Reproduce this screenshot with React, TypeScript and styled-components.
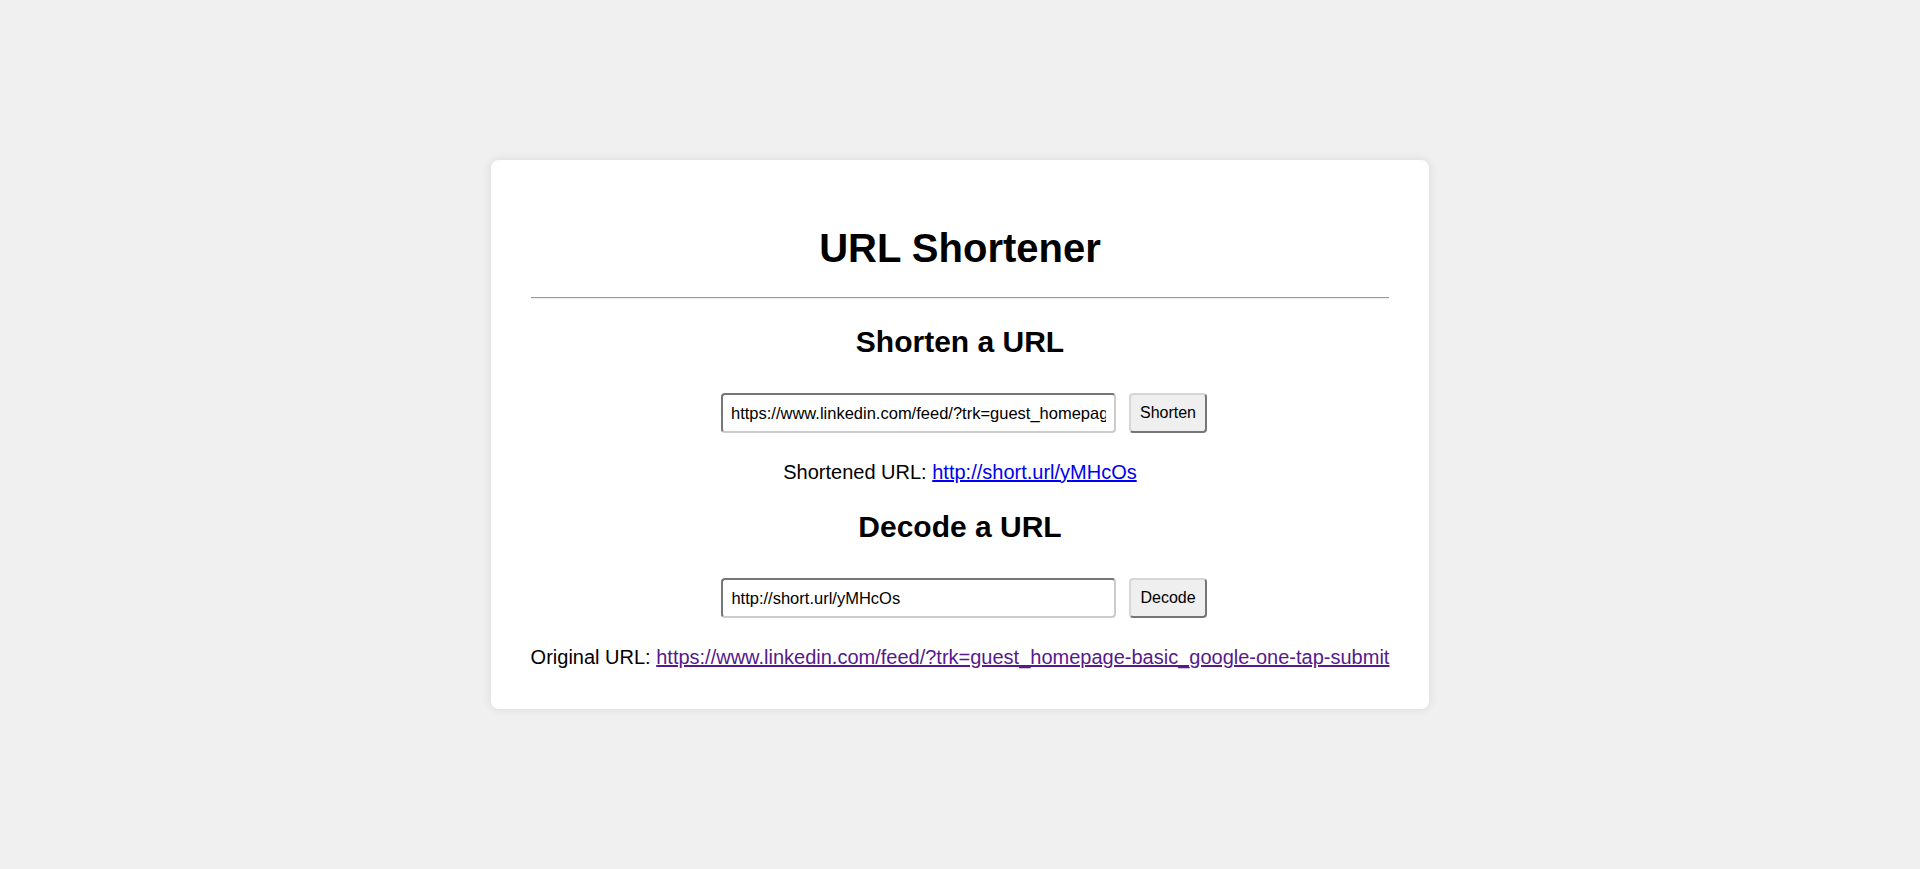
import React from "react";
import styled, { createGlobalStyle } from "styled-components";

const GlobalStyle = createGlobalStyle`
  html, body {
    margin: 0;
    padding: 0;
    background: #f0f0f0;
    font-family: "Liberation Sans", Arial, sans-serif;
  }
`;

const Page = styled.div`
  min-height: 869px;
  display: flex;
  justify-content: center;
  align-items: flex-start;
  padding-top: 160px;
  box-sizing: border-box;
`;

const Card = styled.div`
  background: #ffffff;
  border-radius: 8px;
  box-shadow: 0 0 10px rgba(0, 0, 0, 0.1);
  padding: 28px 40px 40px;
  display: flex;
  flex-direction: column;
  align-items: center;
  color: #000;
`;

const Title = styled.h1`
  font-size: 40px;
  font-weight: bold;
  margin: 0;
  line-height: 46px;
  margin-top: 37px;
`;

const Divider = styled.hr`
  align-self: stretch;
  margin: 26px 0 0;
  border: 0;
  border-top: 1px solid #9a9a9a;
  border-bottom: 1px solid #eeeeee;
`;

const SectionTitle = styled.h2<{ $top: number }>`
  font-size: 30px;
  font-weight: bold;
  line-height: 34px;
  margin: ${(p) => p.$top}px 0 0;
`;

const Row = styled.div`
  display: flex;
  align-items: center;
  gap: 13px;
  margin-top: 34px;
  margin-left: 8px;
`;

const Input = styled.input`
  box-sizing: border-box;
  width: 395px;
  height: 40px;
  padding: 8px;
  font-family: "Liberation Sans", Arial, sans-serif;
  font-size: 16.5px;
  color: #000;
  border: 2px solid;
  border-color: #767676 #cccccc #cccccc #767676;
  border-radius: 4px;
  background: #fff;
  outline: none;
`;

const Button = styled.button`
  box-sizing: border-box;
  height: 40px;
  padding: 0 9px;
  font-family: "Liberation Sans", Arial, sans-serif;
  font-size: 16px;
  color: #000;
  background: #efefef;
  border: 2px solid;
  border-color: #d6d6d6 #767676 #767676 #d6d6d6;
  border-radius: 4px;
  cursor: pointer;
`;

const ResultText = styled.p`
  font-size: 20px;
  line-height: 23px;
  margin: 28px 0 0;
`;

const Link = styled.a<{ $visited?: boolean }>`
  color: ${(p) => (p.$visited ? "#551a8b" : "#0000ee")};
  text-decoration: underline;
`;

export default function App() {
  return (
    <>
      <GlobalStyle />
      <Page>
        <Card>
          <Title>URL Shortener</Title>
          <Divider />
          <SectionTitle $top={26}>Shorten a URL</SectionTitle>
          <Row>
            <Input
              type="text"
              readOnly
              value="https://www.linkedin.com/feed/?trk=guest_homepage-basic_google-one-tap-submit"
            />
            <Button>Shorten</Button>
          </Row>
          <ResultText>
            Shortened URL: <Link href="#">http://short.url/yMHcOs</Link>
          </ResultText>
          <SectionTitle $top={26}>Decode a URL</SectionTitle>
          <Row>
            <Input type="text" readOnly value="http://short.url/yMHcOs" />
            <Button>Decode</Button>
          </Row>
          <ResultText>
            Original URL:{" "}
            <Link href="#" $visited>
              https://www.linkedin.com/feed/?trk=guest_homepage-basic_google-one-tap-submit
            </Link>
          </ResultText>
        </Card>
      </Page>
    </>
  );
}
